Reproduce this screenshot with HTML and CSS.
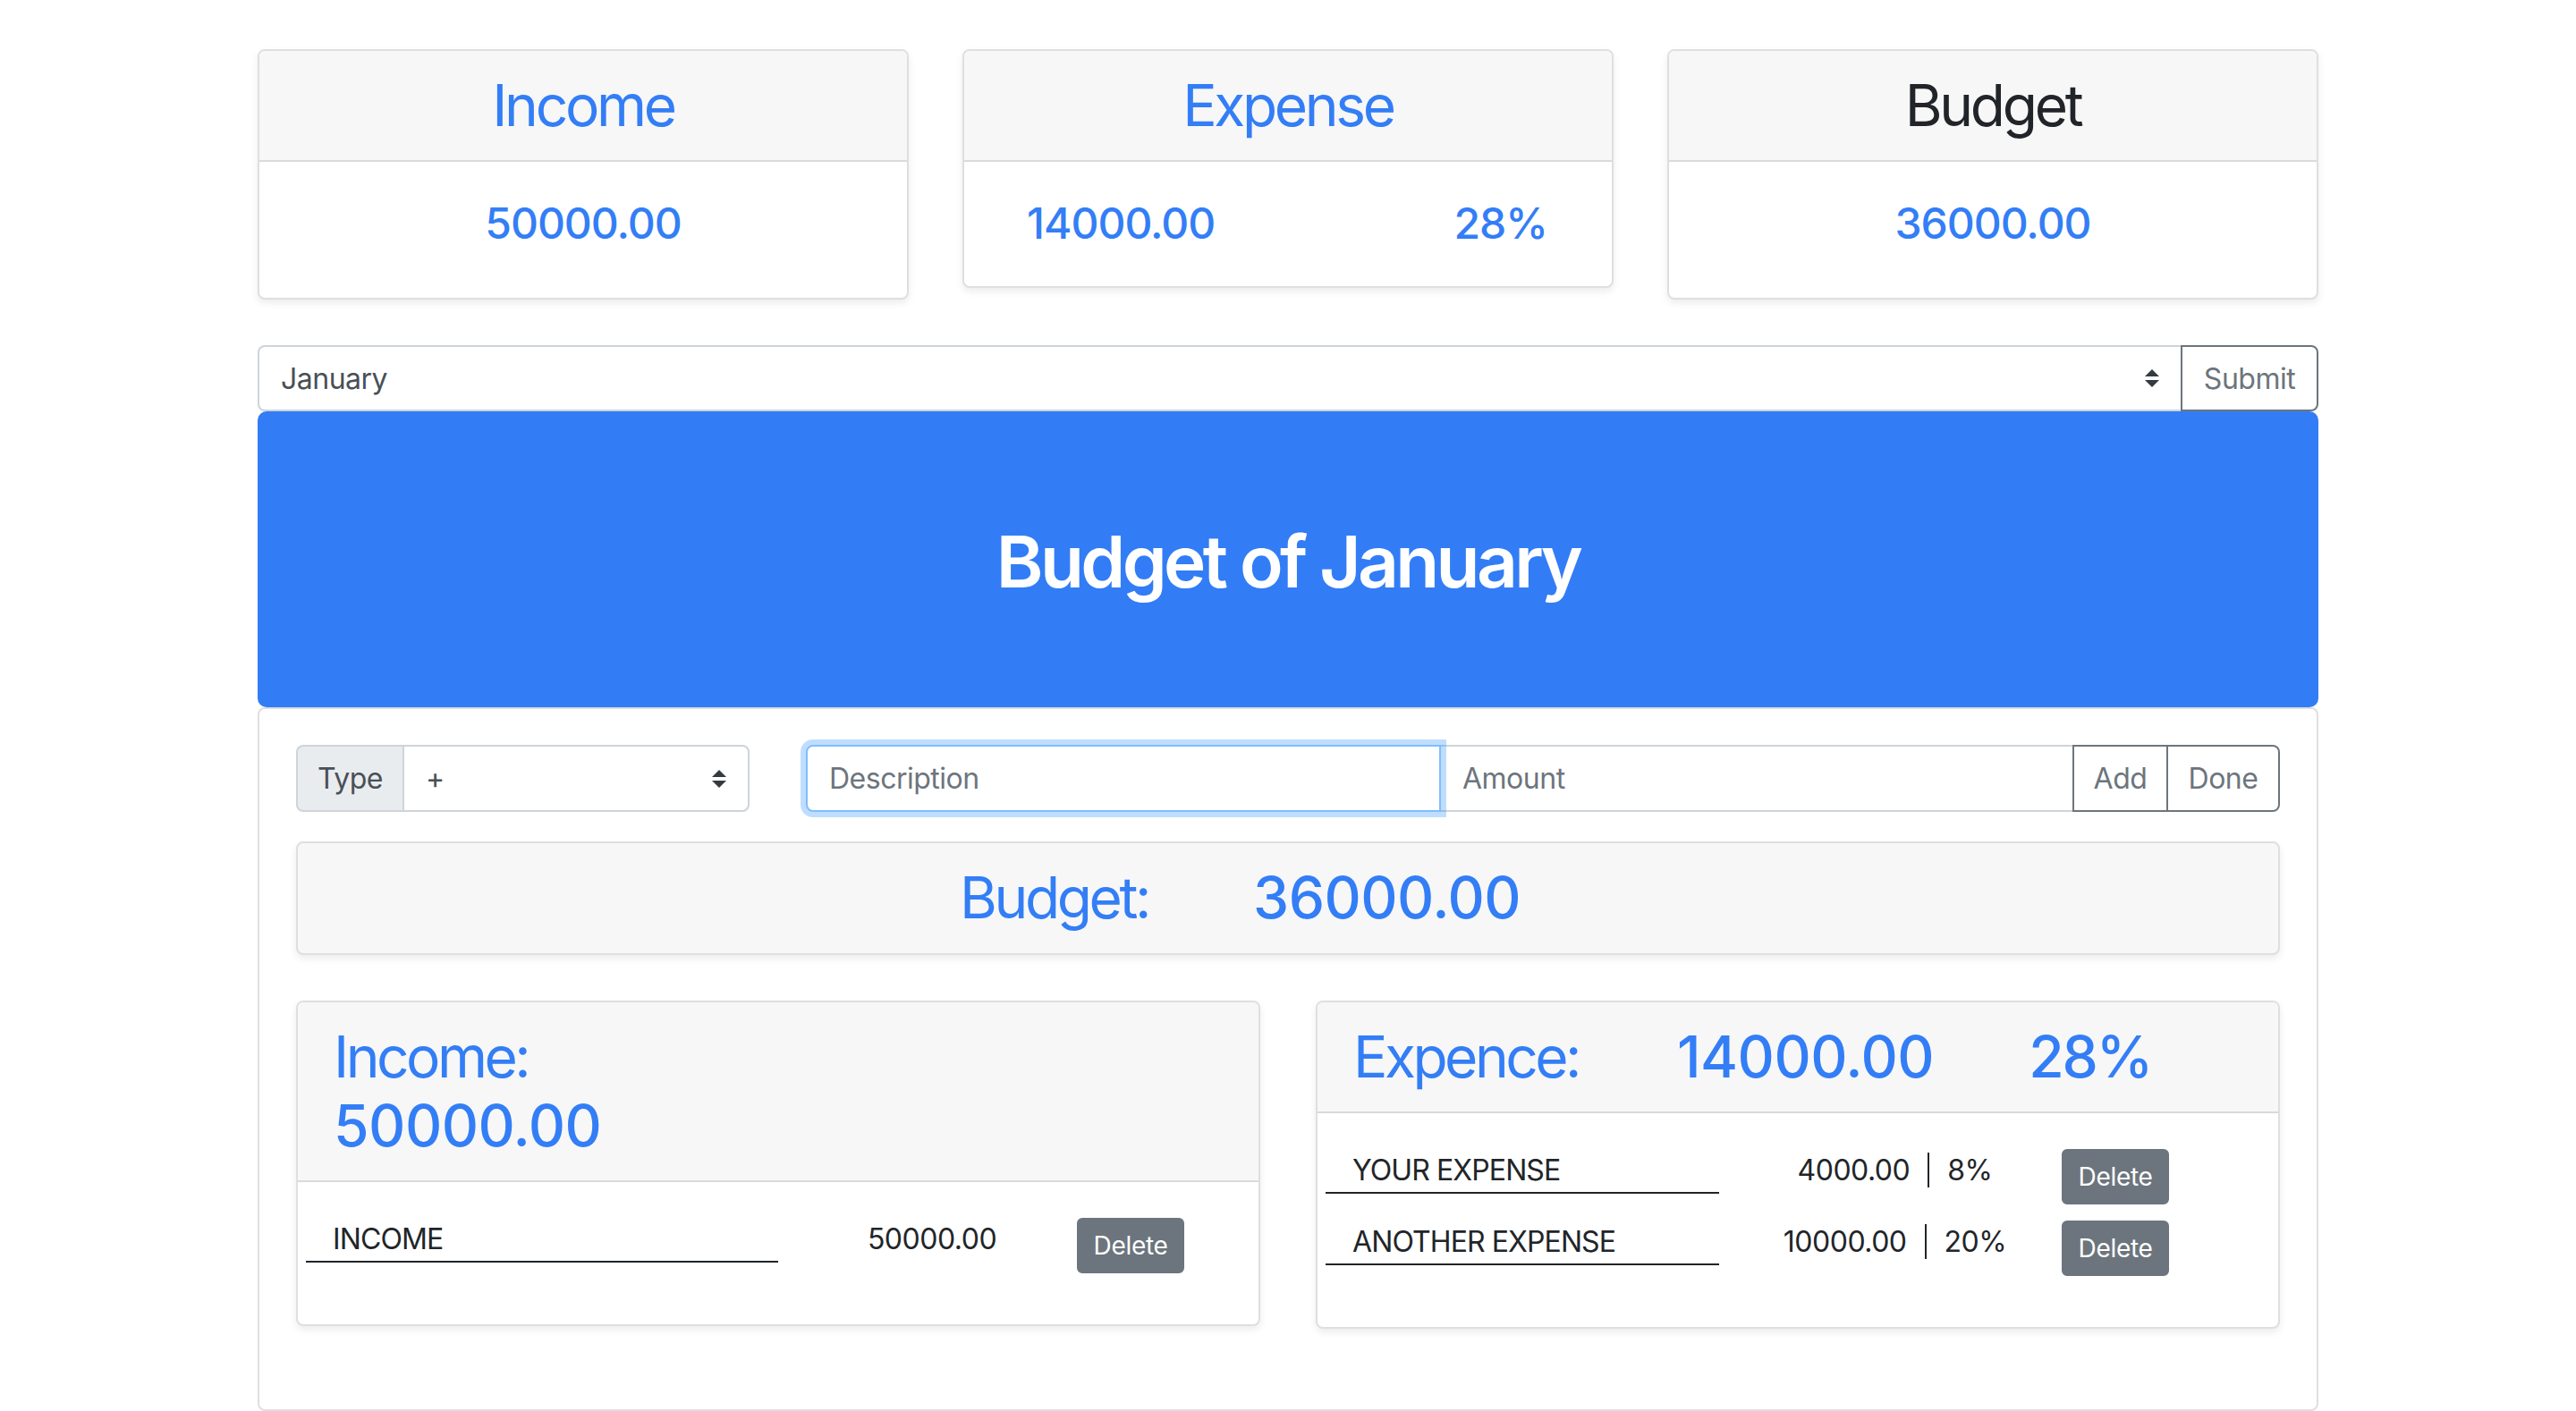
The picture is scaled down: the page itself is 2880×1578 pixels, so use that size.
FILE: index.html
```html
<!DOCTYPE html>
<html lang="en">
<head>
<meta charset="utf-8">
<title>Budget</title>
<link rel="stylesheet" href="styles.css">
</head>
<body>
<div class="container">
  <div class="summary">
    <div class="card">
      <div class="card-header"><h2 class="title blue">Income</h2></div>
      <div class="card-body sum-body"><h4 class="num blue">50000.00</h4></div>
    </div>
    <div class="card">
      <div class="card-header"><h2 class="title blue">Expense</h2></div>
      <div class="card-body sum-body split"><h4 class="num blue">14000.00</h4><h4 class="num blue">28%</h4></div>
    </div>
    <div class="card">
      <div class="card-header"><h2 class="title dark">Budget</h2></div>
      <div class="card-body sum-body"><h4 class="num blue">36000.00</h4></div>
    </div>
  </div>

  <form class="month-form">
    <div class="select month-select"><span>January</span><svg class="caret" width="16" height="20" viewBox="0 0 4 5"><path d="M2 0L0 2h4zm0 5L0 3h4z" fill="#343a40"/></svg></div>
    <button type="button" class="btn-outline submit">Submit</button>
  </form>

  <div class="jumbotron"><h1>Budget of January</h1></div>

  <div class="panel">
    <div class="entry-row">
      <div class="type-group">
        <span class="addon">Type</span>
        <div class="select type-select"><span>+</span><svg class="caret" width="16" height="20" viewBox="0 0 4 5"><path d="M2 0L0 2h4zm0 5L0 3h4z" fill="#343a40"/></svg></div>
      </div>
      <div class="input-group">
        <input class="field focused" type="text" placeholder="Description">
        <input class="field amount" type="text" placeholder="Amount">
        <button type="button" class="btn-outline add">Add</button>
        <button type="button" class="btn-outline done">Done</button>
      </div>
    </div>

    <div class="budget-bar"><h2>Budget:<span class="strong gap-budget">36000.00</span></h2></div>

    <div class="lists">
      <div class="card">
        <div class="card-header"><h2 class="list-title blue">Income:<br><span class="strong">50000.00</span></h2></div>
        <div class="list-body">
          <div class="item">
            <span class="name name-income">INCOME</span>
            <span class="amt amt-income">50000.00</span>
            <button type="button" class="del">Delete</button>
          </div>
        </div>
      </div>
      <div class="card">
        <div class="card-header"><h2 class="list-title blue">Expence:<span class="strong gap-exp">14000.00</span><span class="strong gap-exp pct-head">28%</span></h2></div>
        <div class="list-body">
          <div class="item">
            <span class="name name-expense">YOUR EXPENSE</span>
            <span class="amt amt-expense"><span class="val">4000.00</span><span class="pct">8%</span></span>
            <button type="button" class="del">Delete</button>
          </div>
          <div class="item">
            <span class="name name-expense">ANOTHER EXPENSE</span>
            <span class="amt amt-expense"><span class="val">10000.00</span><span class="pct">20%</span></span>
            <button type="button" class="del">Delete</button>
          </div>
        </div>
      </div>
    </div>
  </div>
</div>
</body>
</html>
```

FILE: styles.css
```css
* { box-sizing: border-box; }

html, body { overflow: hidden; }

body {
  margin: 0;
  background: #fff;
  color: #212529;
  font-family: Inter, "Noto Sans", sans-serif;
  letter-spacing: -0.5px;
}

.container {
  width: 2304px;
  margin: 0 auto;
  padding-top: 55px;
}

.blue { color: #337ef6; }
.dark { color: #212529; }

/* summary cards */
.summary {
  display: grid;
  grid-template-columns: repeat(3, 728px);
  column-gap: 60px;
  align-items: start;
}

.card {
  background: #fff;
  border: 2px solid #dfdfdf;
  border-radius: 8px;
  box-shadow: 0 4px 8px rgba(0, 0, 0, 0.08);
  overflow: hidden;
}

.card-header {
  background: #f7f7f7;
  border-bottom: 2px solid #dadada;
  padding: 23px 40px 22px;
}

.title {
  margin: 0;
  font-size: 64px;
  line-height: 1.2;
  font-weight: 400;
  text-align: center;
  letter-spacing: -3.3px;
}

.sum-body {
  padding: 40px 40px 55px;
  text-align: center;
}

.sum-body.split {
  display: flex;
  justify-content: space-between;
  padding: 40px 72px 42px 70px;
}

.num {
  margin: 0;
  font-size: 48px;
  line-height: 1.2;
  font-weight: 500;
  letter-spacing: -1px;
}

/* month form */
.month-form {
  display: flex;
  height: 74px;
  margin: 51px 0 0;
}

.select {
  display: flex;
  align-items: center;
  justify-content: space-between;
  background: #fff;
  border: 2px solid #ced4da;
  padding: 0 24px;
  font-size: 32px;
  color: #495057;
}

.month-select {
  flex: 1;
  border-right: none;
  border-radius: 8px 0 0 8px;
}

.btn-outline {
  background: #fff;
  border: 2px solid #6c757d;
  color: #6c757d;
  font-family: inherit;
  font-size: 32px;
  letter-spacing: -0.5px;
  padding: 0;
  text-align: center;
}

.submit {
  width: 154px;
  border-radius: 0 8px 8px 0;
}

/* jumbotron */
.jumbotron {
  background: #327df6;
  border-radius: 10px;
  padding: 120px 0 115px;
  text-align: center;
}

.jumbotron h1 {
  margin: 0;
  color: #fff;
  font-size: 80px;
  line-height: 96px;
  font-weight: 600;
  letter-spacing: -3.6px;
}

/* panel */
.panel {
  border: 2px solid #dfdfdf;
  border-radius: 8px;
  padding: 40px 41px 90px;
}

.entry-row {
  display: grid;
  grid-template-columns: 507px 1fr;
  column-gap: 63px;
  height: 75px;
}

.type-group {
  display: flex;
}

.addon {
  width: 119px;
  display: flex;
  align-items: center;
  justify-content: center;
  background: #e9ecef;
  border: 2px solid #ced4da;
  border-right: none;
  border-radius: 8px 0 0 8px;
  font-size: 32px;
  color: #495057;
}

.type-select {
  flex: 1;
  border-radius: 0 8px 8px 0;
}

.input-group {
  display: flex;
}

.field {
  flex: 1;
  min-width: 0;
  border: 2px solid #ced4da;
  padding: 0 24px;
  font-family: inherit;
  font-size: 32px;
  letter-spacing: -0.5px;
  color: #495057;
  background: #fff;
  outline: none;
}

.field::placeholder { color: #6c757d; }

.focused {
  border-color: #80bdff;
  border-radius: 8px 0 0 8px;
  box-shadow: 0 0 0 6px rgba(0, 123, 255, 0.25);
  position: relative;
  z-index: 1;
}

.amount {
  border-left: none;
  border-right: none;
}

.add {
  width: 107px;
}

.done {
  width: 125px;
  border-left: none;
  border-radius: 0 8px 8px 0;
}

/* budget bar */
.budget-bar {
  margin-top: 33px;
  background: #f7f7f7;
  border: 2px solid #dfdfdf;
  border-radius: 8px;
  box-shadow: 0 4px 8px rgba(0, 0, 0, 0.08);
  padding: 23px 40px;
}

.budget-bar h2 {
  margin: 0;
  font-size: 64px;
  line-height: 1.2;
  font-weight: 400;
  text-align: center;
  color: #337ef6;
  letter-spacing: -3.4px;
}

.strong {
  font-weight: 500;
  letter-spacing: -0.5px;
}

.gap-budget {
  margin-left: 117px;
  margin-right: 107px;
}

/* lists */
.lists {
  margin-top: 51px;
  display: grid;
  grid-template-columns: 1078px 1078px;
  column-gap: 62px;
  align-items: start;
}

.list-title {
  margin: 0;
  font-size: 64px;
  line-height: 1.2;
  font-weight: 400;
  letter-spacing: -3.5px;
}

.gap-exp { margin-left: 110px; }

.pct-head {
  margin-left: 106px;
  letter-spacing: -2px;
}

.list-body {
  display: flex;
  flex-direction: column;
  gap: 18px;
  padding: 40px 9px 57px;
}

.item {
  display: flex;
  align-items: flex-start;
}

.name {
  padding-left: 30px;
  font-size: 32px;
  line-height: 48px;
  letter-spacing: -0.9px;
  border-bottom: 2px solid #212529;
}

.name-income { width: 528px; }
.name-expense { width: 440px; }

.amt {
  margin-left: 10px;
  text-align: center;
  font-size: 32px;
  line-height: 48px;
}

.amt-income { width: 324px; }
.amt-expense { width: 373px; }

.val { padding-right: 20px; }

.pct {
  border-left: 2px solid #212529;
  padding-left: 20px;
}

.del {
  width: 120px;
  background: #6c757d;
  border: 2px solid #6c757d;
  border-radius: 6px;
  color: #fff;
  font-family: inherit;
  font-size: 28px;
  line-height: 42px;
  letter-spacing: -0.3px;
  padding: 8px 0;
  text-align: center;
}
```
